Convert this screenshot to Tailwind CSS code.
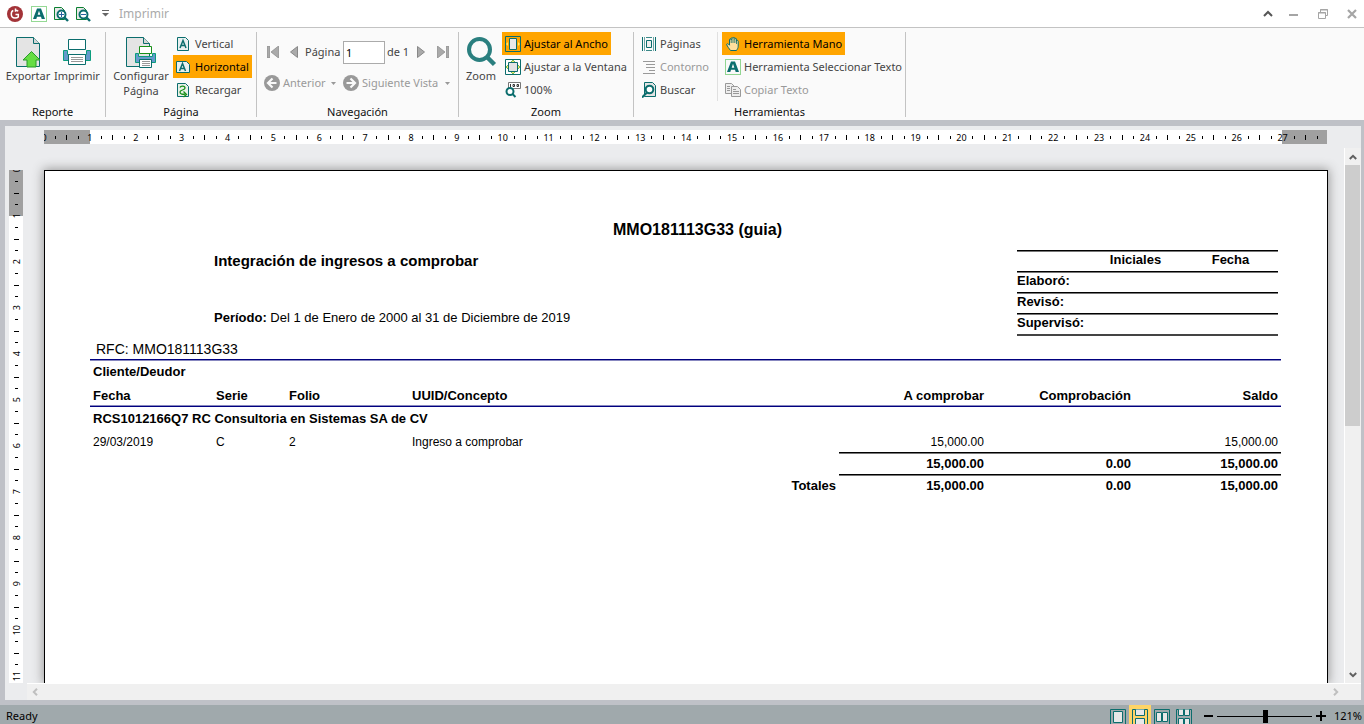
<!DOCTYPE html>
<html lang="es">
<head>
    <meta charset="UTF-8">
    <meta name="viewport" content="width=device-width, initial-scale=1.0">
    <title>Imprimir</title>
    <script src="https://cdn.jsdelivr.net/npm/@tailwindcss/browser@4"></script>
</head>
<body class="h-screen flex flex-col overflow-hidden bg-white text-[11px] leading-4 text-[#444] font-['Noto_Sans','Open_Sans',sans-serif]">

    <!-- Shared drawings -->
    <svg class="hidden">
        <symbol id="select-a" viewBox="0 0 16 16">
            <rect x=".5" y=".5" width="15" height="15" fill="none" stroke="#2bb32b" stroke-dasharray="1 1"/>
            <path d="M6 2.500h4L14 13h-3.300l-.7-2.200H6L5.300 13H2zM8 4.800 6.700 8.700h2.600z" fill="#0b6d6d" fill-rule="evenodd"/>
        </symbol>
        <symbol id="sheet" viewBox="0 0 32 32">
            <path d="M4.500 1.500h17l6 6v23h-23z" fill="#e4e4e4" stroke="#0b6d6d"/>
            <path d="M21.500 1.500v6h6" fill="#d5d5d5" stroke="#0b6d6d"/>
        </symbol>
        <symbol id="caret" viewBox="0 0 5 3">
            <path d="M0 0h5L2.500 3z" fill="currentColor"/>
        </symbol>
    </svg>

    <!-- Title bar -->
    <header class="h-7 shrink-0 flex items-center pl-[7px] pr-[7px] border-b border-[#c3c3c3]">
        <svg class="w-4 h-4" viewBox="0 0 16 16">
            <circle cx="8" cy="8" r="8" fill="#a33338"/>
            <path d="M6.300 4.500C4.800 5 4.300 6.500 4.300 8c0 2.400 1.500 4 3.700 4 1.500 0 2.800-.5 3.300-1V8.500H8.500M8.500 2.500v3.200M8.500 4.300c1.200 0 2 .3 2.700.9" fill="none" stroke="#fff" stroke-width="1.500"/>
        </svg>
        <button class="ml-2" aria-label="Seleccionar texto"><svg class="block w-4 h-4"><use href="#select-a"/></svg></button>
        <button class="ml-[6px]" aria-label="Acercar">
            <svg class="block w-4 h-4" viewBox="0 0 16 16" fill="none">
                <path d="M1.500 1.500h7l3 3v9h-10z" fill="#e8e8e8" stroke="#0b8030"/>
                <circle cx="8.500" cy="8.500" r="4" fill="#fff" stroke="#0b6d6d" stroke-width="2"/>
                <path d="m11.500 11.500 3.500 3.500" stroke="#0b6d6d" stroke-width="2.400"/>
                <path d="M6 8.500h5M8.500 6v5" stroke="#2860a0"/>
            </svg>
        </button>
        <button class="ml-[6px]" aria-label="Alejar">
            <svg class="block w-4 h-4" viewBox="0 0 16 16" fill="none">
                <path d="M1.500 1.500h7l3 3v9h-10z" fill="#e8e8e8" stroke="#0b8030"/>
                <circle cx="8.500" cy="8.500" r="4" fill="#fff" stroke="#0b6d6d" stroke-width="2"/>
                <path d="m11.500 11.500 3.500 3.500" stroke="#0b6d6d" stroke-width="2.400"/>
                <path d="M6 8.500h5" stroke="#2860a0"/>
            </svg>
        </button>
        <button class="ml-[11px]" aria-label="Personalizar barra">
            <svg class="block w-[7px] h-[7px]" viewBox="0 0 7 7"><path d="M0 .5h7" stroke="#666"/><path d="M0 3h7L3.500 6.500z" fill="#666"/></svg>
        </button>
        <h1 class="ml-[10px] text-xs text-[#aaa]">Imprimir</h1>
        <div class="ml-auto flex items-center">
            <button aria-label="Contraer cinta"><svg class="block w-[10px] h-4" viewBox="0 0 10 16" fill="none"><path d="m1 10 4-4 4 4" stroke="#555" stroke-width="2"/></svg></button>
            <button class="ml-4" aria-label="Minimizar"><svg class="block w-[10px] h-4" viewBox="0 0 10 16"><path d="M0 9h9" stroke="#a5a5a5" stroke-width="2"/></svg></button>
            <button class="ml-[19px]" aria-label="Restaurar">
                <svg class="block w-[10px] h-[10px]" viewBox="0 0 10 10" fill="none" stroke="#a5a5a5"><path d="M2.500 3V.5h7v6H7.500M2 1h8M0 4h8"/><path d="M.5 3.500h7v6h-7z"/></svg>
            </button>
            <button class="ml-[19px]" aria-label="Cerrar"><svg class="block w-[10px] h-[10px]" viewBox="0 0 10 10"><path d="m1 1 8 8M9 1 1 9" stroke="#a5a5a5" stroke-width="2.200"/></svg></button>
        </div>
    </header>

    <!-- Ribbon -->
    <nav class="shrink-0 flex h-[92px] bg-[#fafafa] pt-1">
        <section class="w-[106px] h-[85px] border-r border-[#c3c3c3]">
            <div class="h-[72px] flex items-start pl-1">
                <button class="w-12 flex flex-col items-center pt-1">
                    <svg class="w-8 h-8" viewBox="0 0 32 32">
                        <use href="#sheet" width="32" height="32"/>
                        <path d="m19.500 15.500 8.500 8.500h-4v7h-9v-7h-4z" fill="#66dd44" stroke="#2a9a2a"/>
                    </svg>
                    <span>Exportar</span>
                </button>
                <button class="w-[50px] flex flex-col items-center pt-1">
                    <svg class="w-8 h-8" viewBox="0 0 32 32">
                        <path d="M2.500 14.500h4v4h19v-4h4v10h-27z" fill="#6699cc" stroke="#0b9d7d"/>
                        <path d="M7.500 3.500h17v10h-17z" fill="#fff" stroke="#0b6d6d"/>
                        <path d="M7.500 18.500h17v10h-17z" fill="#fff" stroke="#0b6d6d"/>
                        <path d="M10 21.500h12M10 23.500h12M10 25.500h12" stroke="#999"/>
                    </svg>
                    <span>Imprimir</span>
                </button>
            </div>
            <h2 class="text-center text-[#111]">Reporte</h2>
        </section>

        <section class="w-[151px] h-[85px] border-r border-[#c3c3c3]">
            <div class="h-[72px] flex items-start pl-[3px]">
                <button class="w-16 flex flex-col items-center pt-1 leading-[15px]">
                    <svg class="w-8 h-8" viewBox="0 0 32 32">
                        <use href="#sheet" x="-3" width="32" height="32"/>
                        <path d="M10.500 17.500h3v3h14v-3h3v9h-20z" fill="#6699cc" stroke="#0b9d7d"/>
                        <path d="M14.500 10.500h12v7h-12z" fill="#fff" stroke="#189018"/>
                        <path d="M14.500 23.500h12v8h-12z" fill="#fff" stroke="#0b6d6d"/>
                        <path d="M17 25.500h8M17 27.500h8M17 29.500h8" stroke="#999"/>
                    </svg>
                    <span>Configurar<br>Página</span>
                </button>
                <div class="flex flex-col items-start">
                    <button class="h-[23px] flex items-center gap-[3px] px-[3px]">
                        <svg class="w-4 h-4" viewBox="0 0 16 16"><path d="M1.500 1.500h8l3 3v10h-11z" fill="#e8f0f0" stroke="#0b6d6d"/><path d="M4 12 7 4.500 10 12M5 9.500h4" fill="none" stroke="#0b6d6d" stroke-width="1.500"/></svg>
                        Vertical
                    </button>
                    <button class="h-[23px] flex items-center gap-[3px] px-[3px] bg-[#ffa500] text-black">
                        <svg class="w-4 h-4" viewBox="0 0 16 16"><path d="M.5 2.500h10l3 3v8H.5z" fill="#e8f0f0" stroke="#0b6d6d"/><path d="m3.500 12 3-7.500 3 7.500M4.500 9.500h4" fill="none" stroke="#0b6d6d" stroke-width="1.500"/></svg>
                        Horizontal
                    </button>
                    <button class="h-[23px] flex items-center gap-[3px] px-[3px]">
                        <svg class="w-4 h-4" viewBox="0 0 16 16" fill="none"><path d="M1.500 1.500h8l3 3v10h-11z" fill="#e8f0e8" stroke="#0b6d6d"/><path d="M4 5.500C4.500 3.500 9 3.500 9 6S4 7.500 4 10s3 2.500 5 2" stroke="#189018" stroke-width="1.300"/><path d="m7.500 9.500 3 3-3 2.500" stroke="#189018" stroke-width="1.300"/></svg>
                        Recargar
                    </button>
                </div>
            </div>
            <h2 class="text-center text-[#111]">Página</h2>
        </section>

        <section class="w-[202px] h-[85px] border-r border-[#c3c3c3]">
            <div class="h-[72px]">
                <div class="h-10 flex items-center pl-[10px]">
                    <button aria-label="Primera página"><svg class="block w-3 h-3" viewBox="0 0 12 12"><path d="M.5 0h2v12h-2zM11.500 0v12L4 6z" fill="#aaa" stroke="#888" stroke-width=".7"/></svg></button>
                    <button class="ml-[11px]" aria-label="Página anterior"><svg class="block w-2 h-3" viewBox="0 0 8 12"><path d="M7.500.5v11L.5 6z" fill="#aaa" stroke="#888"/></svg></button>
                    <label for="pageNumber" class="ml-[7px] w-[38px]">Página</label>
                    <input id="pageNumber" type="text" value="1" class="w-[42px] h-[23px] border border-[#ababab] bg-white pl-[2px] text-black">
                    <span class="ml-[2px] w-[30px]">de 1</span>
                    <button aria-label="Página siguiente"><svg class="block w-2 h-3" viewBox="0 0 8 12"><path d="M.5.5v11l7-5.500z" fill="#aaa" stroke="#888"/></svg></button>
                    <button class="ml-3" aria-label="Última página"><svg class="block w-3 h-3" viewBox="0 0 12 12"><path d="M9.500 0h2v12h-2zM.5 0v12L8 6z" fill="#aaa" stroke="#888" stroke-width=".7"/></svg></button>
                </div>
                <div class="h-[22px] flex items-center pl-[7px] text-[#999]">
                    <button class="w-[67px] flex items-center gap-[3px]" disabled>
                        <svg class="w-4 h-4" viewBox="0 0 16 16"><circle cx="8" cy="8" r="8" fill="#999"/><path d="M12.500 8H4.500M8.500 3.500 4 8l4.500 4.500" fill="none" stroke="#fafafa" stroke-width="2.200"/></svg>
                        Anterior
                    </button>
                    <svg class="w-[5px] h-[3px]"><use href="#caret"/></svg>
                    <button class="ml-[7px] w-[102px] flex items-center gap-[3px]" disabled>
                        <svg class="w-4 h-4" viewBox="0 0 16 16"><circle cx="8" cy="8" r="8" fill="#999"/><path d="M3.500 8h8M7.500 3.500 12 8l-4.500 4.500" fill="none" stroke="#fafafa" stroke-width="2.200"/></svg>
                        Siguiente Vista
                    </button>
                    <svg class="w-[5px] h-[3px]"><use href="#caret"/></svg>
                </div>
            </div>
            <h2 class="text-center text-[#111]">Navegación</h2>
        </section>

        <section class="w-[175px] h-[85px] border-r border-[#c3c3c3]">
            <div class="h-[72px] flex items-start">
                <button class="w-[43px] pl-px flex flex-col items-center pt-1">
                    <svg class="w-8 h-8" viewBox="0 0 32 32" fill="none" stroke="#2a7f7f"><circle cx="14.500" cy="13.500" r="10.500" stroke-width="4"/><path d="m22 21 7.500 7.500" stroke-width="4.500"/></svg>
                    <span>Zoom</span>
                </button>
                <div class="flex flex-col items-start">
                    <button class="h-[23px] flex items-center gap-[3px] px-[3px] bg-[#ffa500] text-black">
                        <svg class="w-4 h-4" viewBox="0 0 16 16"><path d="M.5.5h15v15H.5z" fill="#ffa500" stroke="#0b6d6d"/><path d="M4.500 2.500h7v11h-7z" fill="#e8e8e8" stroke="#0b6d6d"/><path d="m3 6-2 2 2 2zM13 6l2 2-2 2z" fill="#ffe860"/></svg>
                        Ajustar al Ancho
                    </button>
                    <button class="h-[23px] flex items-center gap-[3px] px-[3px]">
                        <svg class="w-4 h-4" viewBox="0 0 16 16"><path d="M.5.5h15v15H.5z" fill="#fff" stroke="#0b6d6d"/><path d="M3.500 3.500h9v9h-9z" fill="#e4e4e4" stroke="#0b6d6d"/><path d="m6 3 2-2 2 2M6 13l2 2 2-2M3 6 1 8l2 2M13 6l2 2-2 2" fill="#e8e860" stroke="#3c9c3c" stroke-width=".7"/></svg>
                        Ajustar a la Ventana
                    </button>
                    <button class="h-[23px] flex items-center gap-[3px] px-[3px]">
                        <svg class="w-4 h-4" viewBox="0 0 16 16" fill="none"><path d="M3.500.5h12v6h-12z" fill="#fff" stroke="#777"/><path d="M5.500 2v3M8 2.500h1.500v2H8zM12 2.500h1.500v2H12z" stroke="#333"/><circle cx="5" cy="9.500" r="3.500" fill="#fff" stroke="#0b6d6d" stroke-width="2"/><path d="m7.500 12 3 3" stroke="#0b6d6d" stroke-width="2"/></svg>
                        100%
                    </button>
                </div>
            </div>
            <h2 class="text-center text-[#111]">Zoom</h2>
        </section>

        <section class="w-[272px] h-[85px] border-r border-[#c3c3c3]">
            <div class="h-[72px] flex items-start">
                <div class="w-[84px] flex flex-col items-start pl-[5px] border-r border-[#e0e0e0]">
                    <button class="h-[23px] flex items-center gap-[2px] px-[3px]">
                        <svg class="w-4 h-4" viewBox="0 0 16 16" fill="none" stroke="#0b6d6d"><path d="M.5 1v14M13.500 1v14"/><path d="M2.500 1v14M11.500 1v14" stroke-opacity=".6"/><path d="M4.500 4.500h5v7h-5z" fill="#eee"/><path d="M4 1.500h6M4 14.500h6" stroke-opacity=".8"/></svg>
                        Páginas
                    </button>
                    <button class="h-[23px] flex items-center gap-[2px] px-[3px] text-[#999]" disabled>
                        <svg class="w-4 h-4" viewBox="0 0 16 16" stroke="#999"><path d="M1 2.500h12M4 5.500h9M4 8.500h9M7 11.500h6M1 14.500h12"/></svg>
                        Contorno
                    </button>
                    <button class="h-[23px] flex items-center gap-[2px] px-[3px]">
                        <svg class="w-4 h-4" viewBox="0 0 16 16" fill="none" stroke="#0b6d6d"><path d="M2.500.5h8l3 3v11h-11z" fill="#e4e4e4"/><circle cx="7.500" cy="7.500" r="3.800" fill="#fff" stroke-width="2"/><path d="m5 10.500-5 5" stroke-width="2"/></svg>
                        Buscar
                    </button>
                </div>
                <div class="flex flex-col items-start pl-1">
                    <button class="h-[23px] flex items-center gap-[3px] px-[3px] bg-[#ffa500] text-black">
                        <svg class="w-4 h-4" viewBox="0 0 16 16"><path d="M5.500 14.500C4 12.500 2.500 10.500 1.700 8.800 1.300 7.800 2.800 7.300 3.500 8.200l1 1V3.700c0-1.300 1.700-1.300 1.700 0V2.600c0-1.300 1.800-1.300 1.800 0v-.3c0-1.200 1.800-1.200 1.800 0v.9c0-1.200 1.700-1.200 1.700 0v2c0-1.100 1.700-1.100 1.700 0v5c0 2-1 3-1.700 4.300z" fill="#ffdf9e" stroke="#0b6d6d"/><path d="M6.200 3v4M8 3v4M9.800 3v4M11.500 4.500V8" stroke="#0b6d6d" stroke-width=".8"/></svg>
                        Herramienta Mano
                    </button>
                    <button class="h-[23px] flex items-center gap-[3px] px-[3px]">
                        <svg class="w-4 h-4"><use href="#select-a"/></svg>
                        Herramienta Seleccionar Texto
                    </button>
                    <button class="h-[23px] flex items-center gap-[3px] px-[3px] text-[#999]" disabled>
                        <svg class="w-4 h-4" viewBox="0 0 16 16" fill="#eee" stroke="#999"><path d="M.5 1.500h6l3 3v7h-9z"/><path d="M6.500 4.500h6l3 3v7h-9z"/><path d="M2 4.500h3M2 6.500h3M2 8.500h3M8 7.500h3M8 9.500h6M8 11.500h6"/></svg>
                        Copiar Texto
                    </button>
                </div>
            </div>
            <h2 class="text-center text-[#111]">Herramientas</h2>
        </section>
    </nav>

    <!-- Viewer -->
    <main class="flex-1 min-h-0 flex bg-[#ebecee] border-[#bfc1c7] border-t-[6px] border-l-[5px] border-r-[3px] border-b-[5px]">
        <div class="w-[22px] shrink-0 pl-1 pt-[44px] pb-[17px] flex">
            <div id="rulerY" class="w-[14px] overflow-hidden flex flex-col text-[9px] leading-none text-black bg-[linear-gradient(to_bottom,#a0a0a0_46px,#fff_46px)]"></div>
        </div>
        <div class="flex-1 min-w-0 flex flex-col">
            <div class="pl-[17px] pr-[34px] py-1">
                <div id="rulerX" class="h-[14px] overflow-hidden flex text-[9px] leading-none text-black bg-[linear-gradient(to_right,#a0a0a0_46px,#fff_46px,#fff_calc(100%-45px),#a0a0a0_calc(100%-45px))]"></div>
            </div>
            <div class="flex-1 min-h-0 flex">
                <div class="flex-1 min-w-0 overflow-hidden flex pl-[17px] pr-4 pt-[22px]">

                    <!-- Report page -->
                    <article class="flex-1 bg-white border-t border-x border-black shadow-[0_0_10px_1px_#999] pl-[45px] pr-[46px] pt-[47px] text-black text-[13px] leading-5 font-['Liberation_Sans',Arial,sans-serif]">
                        <h2 class="pl-6 text-center text-base leading-6 font-bold">MMO181113G33 (guia)</h2>
                        <div class="flex justify-between items-start pt-2 pl-[124px] pr-[3px]">
                            <div>
                                <h3 class="text-[15px] leading-[22px] font-bold">Integración de ingresos a comprobar</h3>
                                <p class="pt-9"><b>Período:</b> Del 1 de Enero de 2000 al 31 de Diciembre de 2019</p>
                            </div>
                            <table class="w-[261px] table-fixed border-separate border-spacing-0 text-left leading-4 border-b-2 border-[#444]">
                                <thead>
                                    <tr class="h-[21px] *:align-top *:border-t *:border-black *:shadow-[inset_0_1px_0_#777] *:px-0 *:pt-px *:pb-0 *:font-bold">
                                        <th class="w-[71px]"></th>
                                        <th class="text-center">Iniciales</th>
                                        <th class="text-center">Fecha</th>
                                    </tr>
                                </thead>
                                <tbody>
                                    <tr class="h-[21px] *:align-top *:border-t *:border-black *:shadow-[inset_0_1px_0_#777] *:px-0 *:pt-px *:pb-0"><th colspan="3">Elaboró:</th></tr>
                                    <tr class="h-[21px] *:align-top *:border-t *:border-black *:shadow-[inset_0_1px_0_#777] *:px-0 *:pt-px *:pb-0"><th colspan="3">Revisó:</th></tr>
                                    <tr class="h-[21px] *:align-top *:border-t *:border-black *:shadow-[inset_0_1px_0_#777] *:px-0 *:pt-px *:pb-0"><th colspan="3">Supervisó:</th></tr>
                                </tbody>
                            </table>
                        </div>
                        <p class="pt-[3px] pl-[6px] text-sm leading-5">RFC: MMO181113G33</p>
                        <table class="w-full table-fixed border-separate border-spacing-0 text-left border-t border-[#00007f] shadow-[inset_0_1px_0_#8888c0]">
                            <colgroup>
                                <col class="w-[123px]"><col class="w-[73px]"><col class="w-[123px]"><col>
                                <col class="w-[148px]"><col class="w-[147px]"><col class="w-[147px]">
                            </colgroup>
                            <thead>
                                <tr class="h-[23px] *:px-[3px] *:py-0"><th colspan="7">Cliente/Deudor</th></tr>
                                <tr class="h-6 *:px-[3px] *:pt-[2px] *:pb-0 *:border-b *:border-[#00007f] *:shadow-[inset_0_-1px_0_#8888c0]">
                                    <th>Fecha</th><th>Serie</th><th>Folio</th><th>UUID/Concepto</th>
                                    <th class="text-right">A comprobar</th><th class="text-right">Comprobación</th><th class="text-right">Saldo</th>
                                </tr>
                            </thead>
                            <tbody>
                                <tr class="h-[23px] *:px-[3px] *:py-0"><th colspan="7">RCS1012166Q7 RC Consultoria en Sistemas SA de CV</th></tr>
                                <tr class="h-[22px] text-xs leading-5 *:px-[3px] *:pt-[2px] *:pb-0">
                                    <td>29/03/2019</td><td>C</td><td>2</td><td>Ingreso a comprobar</td>
                                    <td class="text-right">15,000.00</td><td></td><td class="text-right">15,000.00</td>
                                </tr>
                            </tbody>
                            <tfoot class="text-right font-bold">
                                <tr class="h-[22px] *:px-[3px] *:pt-px *:pb-0">
                                    <td colspan="4"></td>
                                    <td class="border-t border-black shadow-[inset_0_1px_0_#777]">15,000.00</td><td class="border-t border-black shadow-[inset_0_1px_0_#777]">0.00</td><td class="border-t border-black shadow-[inset_0_1px_0_#777]">15,000.00</td>
                                </tr>
                                <tr class="h-[22px] *:px-[3px] *:pt-px *:pb-0">
                                    <td colspan="4" class="border-t border-transparent">Totales</td>
                                    <td class="border-t border-black shadow-[inset_0_1px_0_#777]">15,000.00</td><td class="border-t border-black shadow-[inset_0_1px_0_#777]">0.00</td><td class="border-t border-black shadow-[inset_0_1px_0_#777]">15,000.00</td>
                                </tr>
                            </tfoot>
                        </table>
                    </article>
                </div>
                <div class="w-[17px] shrink-0 flex flex-col bg-[#f0f0f0] border-l border-white">
                    <button class="h-[17px] flex items-center justify-center" aria-label="Subir"><svg class="w-2 h-2" viewBox="0 0 8 8" fill="none"><path d="m.8 6 3.200-3.200L7.200 6" stroke="#606060" stroke-width="2"/></svg></button>
                    <div class="flex-1"><div class="h-[52%] mr-px bg-[#cdcdcd]"></div></div>
                    <button class="h-[17px] flex items-center justify-center" aria-label="Bajar"><svg class="w-2 h-2" viewBox="0 0 8 8" fill="none"><path d="m.8 2 3.200 3.200L7.200 2" stroke="#606060" stroke-width="2"/></svg></button>
                </div>
            </div>
            <div class="h-[17px] shrink-0 flex items-center justify-between pl-1 pr-[21px] bg-[#f0f0f0] border-t border-white">
                <button aria-label="Izquierda"><svg class="block w-2 h-2" viewBox="0 0 8 8" fill="none"><path d="M6 .8 2.800 4 6 7.200" stroke="#bfbfbf" stroke-width="2"/></svg></button>
                <button aria-label="Derecha"><svg class="block w-2 h-2" viewBox="0 0 8 8" fill="none"><path d="M2 .8 5.200 4 2 7.200" stroke="#bfbfbf" stroke-width="2"/></svg></button>
            </div>
        </div>
    </main>

    <!-- Status bar -->
    <footer class="h-[19px] shrink-0 flex items-start overflow-hidden pl-[6px] pr-[2px] bg-[#a0a9ac] text-black">
        <span class="pt-[3px]">Ready</span>
        <div class="ml-auto flex">
            <button class="w-[22px] h-6 flex justify-center pt-1" aria-label="Una página">
                <svg class="w-4 h-4" viewBox="0 0 16 16" fill="none" stroke="#0b6d6d"><path d="M.5.5h15v17H.5z"/><path d="M3.500 2.500h9v11h-9z" fill="#e8e8e8"/></svg>
            </button>
            <button class="w-[22px] h-6 flex justify-center pt-1 bg-[#ffd466]" aria-label="Continuo">
                <svg class="w-4 h-4" viewBox="0 0 16 16" fill="none" stroke="#0b6d6d"><path d="M.5.5h15v17H.5z"/><path d="M3.500 .5v6h9v-6M3.500 17V9.500h9V17" fill="#e8e8e8"/></svg>
            </button>
            <button class="w-[22px] h-6 flex justify-center pt-1" aria-label="Dos páginas">
                <svg class="w-4 h-4" viewBox="0 0 16 16" fill="none" stroke="#0b6d6d"><path d="M.5.5h15v17H.5z"/><path d="M2.500 3.500h5v9h-5zM8.500 3.500h5v9h-5z" fill="#e8e8e8"/></svg>
            </button>
            <button class="w-[22px] h-6 flex justify-center pt-1" aria-label="Dos páginas continuo">
                <svg class="w-4 h-4" viewBox="0 0 16 16" fill="none" stroke="#0b6d6d"><path d="M.5.5h15v17H.5z"/><path d="M2.500 .5v6h5v-6M8.500 .5v6h5v-6M2.500 17V9.500h5V17M8.500 17V9.500h5V17" fill="#e8e8e8"/></svg>
            </button>
        </div>
        <button class="ml-[9px] pt-[6px]" aria-label="Reducir zoom"><svg class="block w-[10px] h-[10px]" viewBox="0 0 10 10"><path d="M0 5h9" stroke="#000" stroke-width="2"/></svg></button>
        <input type="range" min="0" max="100" value="51" aria-label="Zoom" class="ml-[3px] mt-[5px] w-[95px] h-[13px] appearance-none bg-[linear-gradient(#000,#000)] bg-[length:100%_1px] bg-center bg-no-repeat [&::-webkit-slider-thumb]:appearance-none [&::-webkit-slider-thumb]:w-[5px] [&::-webkit-slider-thumb]:h-[13px] [&::-webkit-slider-thumb]:bg-black">
        <button class="ml-1 pt-[6px]" aria-label="Aumentar zoom"><svg class="block w-[10px] h-[10px]" viewBox="0 0 10 10"><path d="M0 5h10M5 0v10" stroke="#000" stroke-width="2"/></svg></button>
        <span class="w-9 pt-[3px] text-right">121%</span>
    </footer>

    <script>
        // Letter landscape: 27.94 cm wide, one mark every quarter of a centimetre
        const PAGE_CM = 27.94;
        const CM_PX = 46;

        function markHtml(i, vertical) {
            if (i % 4 === 0) {
                return vertical
                    ? `<span class="[writing-mode:vertical-rl] rotate-180">${i / 4}</span>`
                    : `<span>${i / 4}</span>`;
            }
            if (vertical) {
                return i % 2 === 0 ? '<i class="block w-[5px] h-px bg-black"></i>' : '<i class="block w-[3px] h-px bg-black"></i>';
            }
            return i % 2 === 0 ? '<i class="block w-px h-[5px] bg-black"></i>' : '<i class="block w-px h-[3px] bg-black"></i>';
        }

        function buildRuler(id, count, size, vertical) {
            const ruler = document.getElementById(id);
            for (let i = 0; i <= count; i++) {
                const cell = document.createElement('div');
                cell.className = 'shrink-0 flex items-center justify-center';
                // each cell is centred on its mark, so the first one starts half a cell early
                if (vertical) {
                    cell.style.height = `${size}px`;
                    if (i === 0) cell.style.marginTop = `${-size / 2}px`;
                } else {
                    cell.style.width = `${size}%`;
                    if (i === 0) cell.style.marginLeft = `${-size / 2}%`;
                }
                cell.innerHTML = markHtml(i, vertical);
                ruler.appendChild(cell);
            }
        }

        buildRuler('rulerX', 111, 100 / (PAGE_CM * 4), false);
        buildRuler('rulerY', 44, CM_PX / 4, true);
    </script>
</body>
</html>
